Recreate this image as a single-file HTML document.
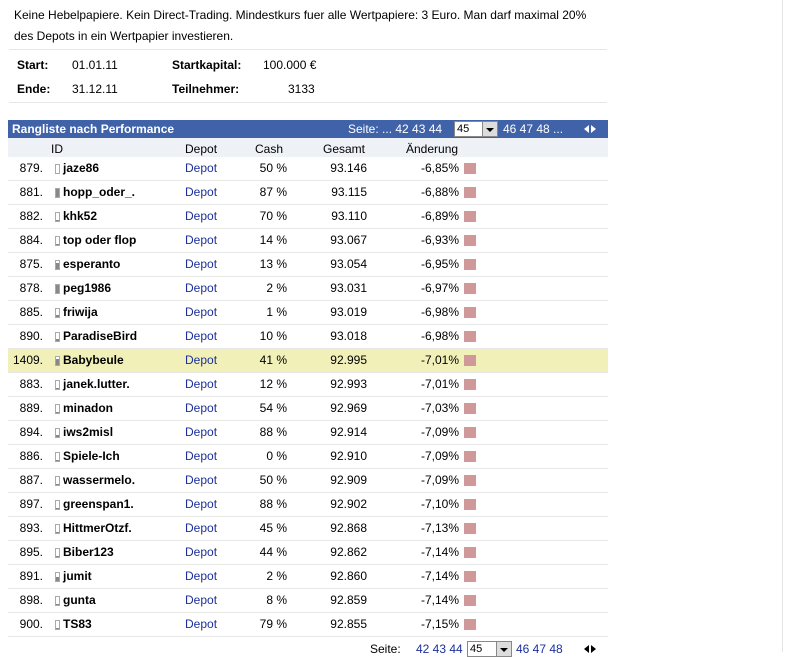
<!DOCTYPE html>
<html><head><meta charset="utf-8"><style>
body{margin:0;width:785px;height:652px;overflow:hidden;background:#fff;font-family:"Liberation Sans",Arial,sans-serif;font-size:12px;color:#000;position:relative}
.vl{position:absolute;left:782px;top:0;width:1px;height:652px;background:#e4e4e4}
.intro{position:absolute;left:14px;top:5px;width:590px;line-height:21px}
.hr{position:absolute;left:9px;width:598px;height:1px;background:#e6e6e6}
.info{position:absolute;font-size:12px}
.b{font-weight:bold}
.bar{position:absolute;left:8px;top:120px;width:600px;height:18px;background:#4062a8;color:#fff}
.bar .t{position:absolute;left:4px;top:2px;font-weight:bold}
.bar .p{position:absolute;left:340px;top:2px}
.sel{position:absolute;background:#fff;border:1px solid #888;height:14px;top:1px;color:#000;font-size:11px}
.sel span{position:absolute;left:2px;top:1px}
.sel i{position:absolute;right:0;top:0;width:14px;height:14px;background:#ddd;border-left:1px solid #888}
.sel i:after{content:"";position:absolute;left:3px;top:6px;border:4px solid transparent;border-top:4px solid #000}
.sub{position:absolute;left:8px;top:138px;width:600px;height:19px;background:#eef2f7}
.sub div,.row div{position:absolute;top:4px}
.row{position:absolute;left:8px;width:600px;height:23px;border-bottom:1px solid #e8e8e8}
.r{text-align:right}
.dep{color:#1b2f9c}
.ic{position:absolute;width:3px;height:8px;border:1px solid #aaa;top:7px!important;left:47px;background:#fff}
.ic b{position:absolute;left:0;bottom:0;width:3px;background:#888}
.sq{left:456px;top:6px!important;width:12px;height:11px;background:#d09898}
.hl{background:#f2f0b9}
.arr{position:absolute;width:0;height:0;border:4px solid transparent}
</style></head><body>
<div class="vl"></div>
<div class="intro">Keine Hebelpapiere. Kein Direct-Trading. Mindestkurs fuer alle Wertpapiere: 3 Euro. Man darf maximal 20% des Depots in ein Wertpapier investieren.</div>
<div class="hr" style="top:49px"></div>
<div class="info b" style="left:17px;top:58px">Start:</div><div class="info" style="left:72px;top:58px">01.01.11</div>
<div class="info b" style="left:172px;top:58px">Startkapital:</div><div class="info" style="left:263px;top:58px">100.000 €</div>
<div class="info b" style="left:17px;top:82px">Ende:</div><div class="info" style="left:72px;top:82px">31.12.11</div>
<div class="info b" style="left:172px;top:82px">Teilnehmer:</div><div class="info" style="left:288px;top:82px">3133</div>
<div class="hr" style="top:102px"></div>
<div class="bar"><div class="t">Rangliste nach Performance</div><div class="p">Seite: ... 42 43 44</div>
<div class="sel" style="left:446px;width:42px"><span>45</span><i></i></div>
<div class="p" style="left:495px">46 47 48 ...</div>
<div class="arr" style="left:576px;top:5px;border-right:5px solid #fff;border-left:0"></div>
<div class="arr" style="left:583px;top:5px;border-left:5px solid #fff;border-right:0"></div></div>
<div class="sub"><div style="left:43px">ID</div><div style="left:177px">Depot</div><div style="left:247px">Cash</div><div style="left:315px">Gesamt</div><div style="left:398px">Änderung</div></div>
<div id="rows"></div>
<div style="position:absolute;left:370px;top:642px">Seite:</div>
<div style="position:absolute;left:416px;top:642px;color:#1b2f9c">42 43 44</div>
<div class="sel" style="left:467px;top:641px;width:43px;height:14px"><span>45</span><i></i></div>
<div style="position:absolute;left:516px;top:642px;color:#1b2f9c">46 47 48</div>
<div class="arr" style="left:584px;top:645px;border-right:5px solid #000;border-left:0"></div>
<div class="arr" style="left:591px;top:645px;border-left:5px solid #000;border-right:0"></div>
<script>
var d=[["879.","jaze86","50 %","93.146","-6,85%",0],["881.","hopp_oder_.","87 %","93.115","-6,88%",8],["882.","khk52","70 %","93.110","-6,89%",1],["884.","top oder flop","14 %","93.067","-6,93%",1],["875.","esperanto","13 %","93.054","-6,95%",6],["878.","peg1986","2 %","93.031","-6,97%",8],["885.","friwija","1 %","93.019","-6,98%",2],["890.","ParadiseBird","10 %","93.018","-6,98%",2],["1409.","Babybeule","41 %","92.995","-7,01%",6],["883.","janek.lutter.","12 %","92.993","-7,01%",1],["889.","minadon","54 %","92.969","-7,03%",1],["894.","iws2misl","88 %","92.914","-7,09%",2],["886.","Spiele-Ich","0 %","92.910","-7,09%",1],["887.","wassermelo.","50 %","92.909","-7,09%",1],["897.","greenspan1.","88 %","92.902","-7,10%",1],["893.","HittmerOtzf.","45 %","92.868","-7,13%",1],["895.","Biber123","44 %","92.862","-7,14%",1],["891.","jumit","2 %","92.860","-7,14%",4],["898.","gunta","8 %","92.859","-7,14%",1],["900.","TS83","79 %","92.855","-7,15%",1]];
var h="";d.forEach(function(r,i){h+='<div class="row'+(i==8?' hl':'')+'" style="top:'+(157+i*24)+'px"><div class="r" style="left:0;width:35px">'+r[0]+'</div><div class="ic"><b style="height:'+r[5]+'px"></b></div><div class="b" style="left:55px">'+r[1]+'</div><div class="dep" style="left:177px">Depot</div><div class="r" style="left:220px;width:59px">'+r[2]+'</div><div class="r" style="left:300px;width:59px">'+r[3]+'</div><div class="r" style="left:380px;width:71px">'+r[4]+'</div><div class="sq"></div></div>';});
document.getElementById("rows").innerHTML=h;
</script>
</body></html>
